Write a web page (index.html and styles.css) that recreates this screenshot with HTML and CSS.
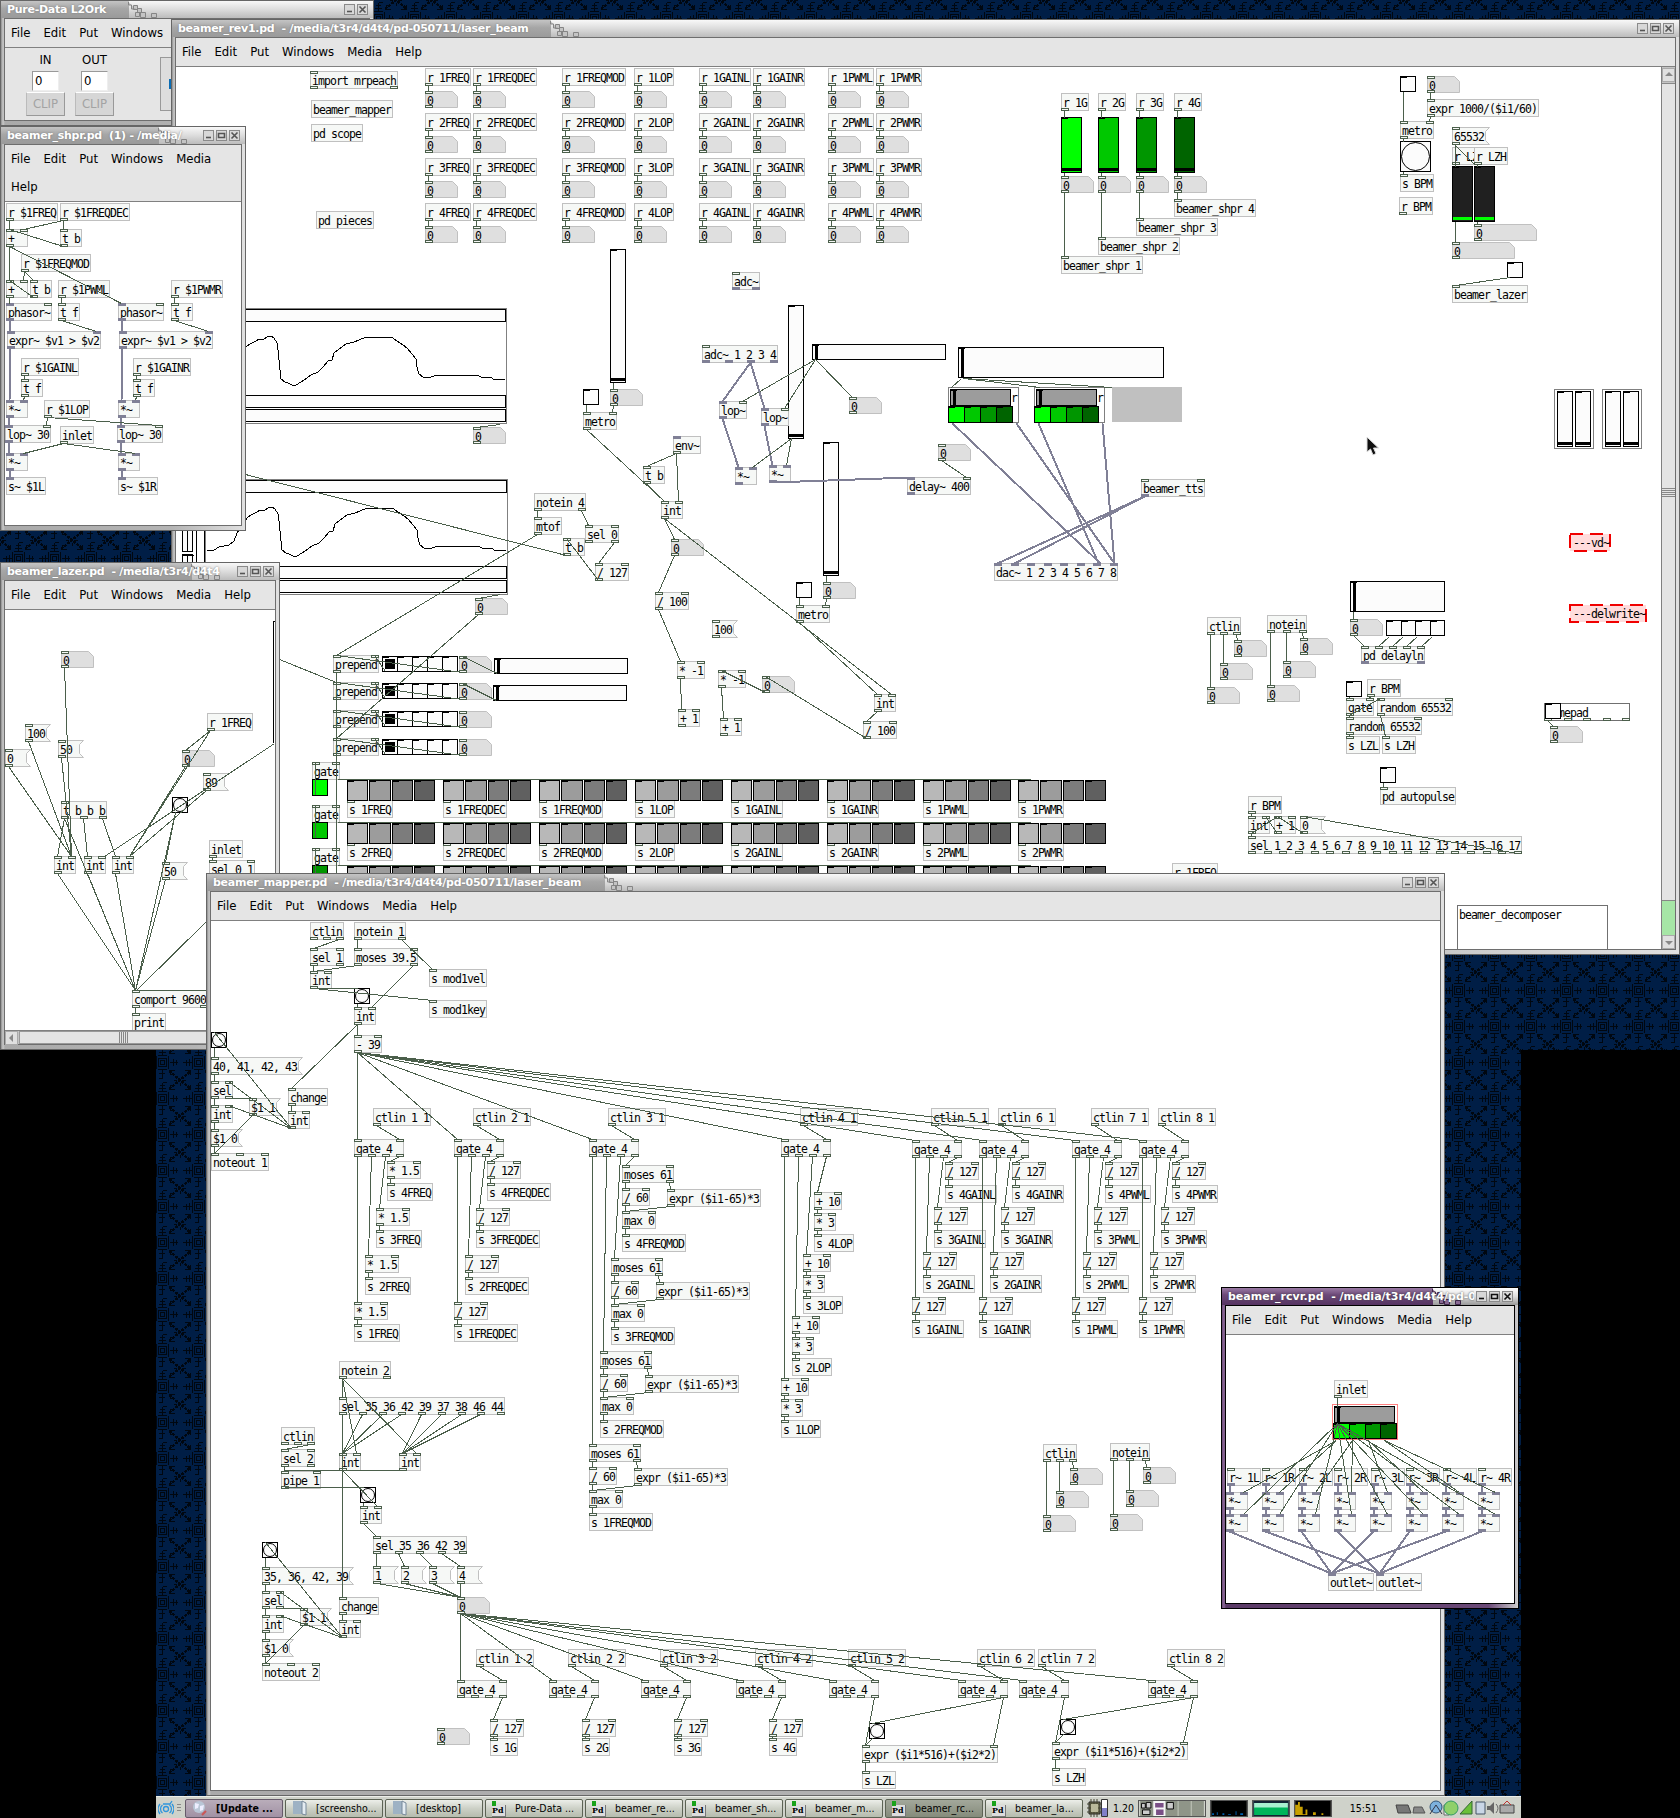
FILE: index.html
```html
<!DOCTYPE html>
<html lang="en">
<head>
<meta charset="utf-8">
<title>Pure-Data L2Ork desktop</title>
<link rel="stylesheet" href="styles.css">
</head>
<body>
<main class="desktop">
  <svg class="wallpaper" aria-hidden="true">
    <defs>
      <pattern id="damask" x="144" y="1044" width="36" height="36" patternUnits="userSpaceOnUse">
        <rect width="36" height="36" class="wp-base"/>
        <path class="wp-ink" d="M16.500 16.500h4v4h-4zM14.500 14.500h8v8h-8zM12.500 12v13M24.500 12v13M14 11.500h9M14 25.500h9M18.500 3v8M15 8.500h7M16 5.500h5M18.500 2.500h4M18.500 26v8M15 29.500h6M15 34.500h4M3 18.500h9M6.500 16v6M9.500 15v7M26 18.500h8M29.500 15v7M32.500 16v5"/>
        <path class="wp-ink wp-thick" d="M-11 -9L11 9M-11 9L11 -9M25 27L47 45M25 45L47 27M25 9L47 -9M25 -9L47 9M-11 27L11 45M-11 45L11 27"/>
        <path class="wp-ink" d="M5 9.500h5V5M26 5v4.500h5M5 26.500h5V31M26 31v-4.500h5M0 3v3M36 3v3M3 0h3M33 0h-3M3 36h3M33 36h-3"/>
      </pattern>
    </defs>
    <rect width="1680" height="1050" fill="url(#damask)"/>
    <rect x="156" y="1050" width="1365" height="768" fill="url(#damask)"/>
  </svg>

  <section class="window win-console">
    <header class="titlebar"><h2>Pure-Data L2Ork</h2></header>
    <div class="body">
      <nav class="menubar"><span>File</span><span>Edit</span><span>Put</span><span>Windows</span></nav>
      <div class="console">
        <div class="meter"><span>IN</span><span class="field">0</span><span class="clip">CLIP</span></div>
        <div class="meter"><span>OUT</span><span class="field">0</span><span class="clip">CLIP</span></div>
        <div class="dsp"></div>
      </div>
    </div>
  </section>

  <section class="window win-rev">
    <header class="titlebar"><h2>beamer_rev1.pd&nbsp; - /media/t3r4/d4t4/pd-050711/laser_beam</h2></header>
    <div class="body">
      <nav class="menubar"><span>File</span><span>Edit</span><span>Put</span><span>Windows</span><span>Media</span><span>Help</span></nav>
      <div class="row">
        <div class="canvas" id="rev"></div>
        <div class="vscroll"><i class="arrow up"></i><i class="thumb"></i><i class="page"></i><i class="arrow down"></i></div>
      </div>
    </div>
  </section>

  <section class="window win-shpr">
    <header class="titlebar"><h2>beamer_shpr.pd&nbsp; (1) - /media/</h2></header>
    <div class="body">
      <nav class="menubar"><span>File</span><span>Edit</span><span>Put</span><span>Windows</span><span>Media</span><span>Help</span></nav>
      <div class="canvas" id="shpr"></div>
    </div>
  </section>

  <section class="window win-lazer">
    <header class="titlebar"><h2>beamer_lazer.pd&nbsp; - /media/t3r4/d4t4</h2></header>
    <div class="body">
      <nav class="menubar"><span>File</span><span>Edit</span><span>Put</span><span>Windows</span><span>Media</span><span>Help</span></nav>
      <div class="canvas" id="lazer"></div>
      <div class="hscroll"><i class="arrow left"></i><i class="thumb"></i></div>
    </div>
  </section>

  <section class="window win-mapper">
    <header class="titlebar"><h2>beamer_mapper.pd&nbsp; - /media/t3r4/d4t4/pd-050711/laser_beam</h2></header>
    <div class="body">
      <nav class="menubar"><span>File</span><span>Edit</span><span>Put</span><span>Windows</span><span>Media</span><span>Help</span></nav>
      <div class="canvas" id="mapper"></div>
    </div>
  </section>

  <section class="window win-rcvr active">
    <header class="titlebar"><h2>beamer_rcvr.pd&nbsp; - /media/t3r4/d4t4/pd-0</h2></header>
    <div class="body">
      <nav class="menubar"><span>File</span><span>Edit</span><span>Put</span><span>Windows</span><span>Media</span><span>Help</span></nav>
      <div class="canvas" id="rcvr"></div>
    </div>
  </section>

  <footer class="taskbar">
    <svg class="launcher" viewBox="0 0 16 16"><circle cx="8" cy="9" r="2.500"/><path d="M4.500 5a5 5 0 0 0 0 8M2 4a8 8 0 0 0 0 10M11.500 5a5 5 0 0 1 0 8M14 4a8 8 0 0 1 0 10M5 4h7l2-3"/></svg>
    <i class="grip"></i>
    <span class="task urgent"><svg viewBox="0 0 16 16"><circle cx="8" cy="7" r="6" fill="#b9c6d6"/><path d="M4 3l4 1l-1 4l-3 1zM9 6l4-1l-1 5l-3 1z" fill="#eef"/><path d="M11 15l4-4" stroke="#c55" stroke-width="2"/></svg><b>[Update ...</b></span>
    <span class="task"><svg viewBox="0 0 16 16"><path d="M2 1h9v13H2z" fill="#9eb2c4"/><path d="M11 1l4 2v12l-4-1z" fill="#e4ecf2" stroke="#789"/></svg>[screensho...</span>
    <span class="task"><svg viewBox="0 0 16 16"><path d="M2 1h9v13H2z" fill="#9eb2c4"/><path d="M11 1l4 2v12l-4-1z" fill="#e4ecf2" stroke="#789"/></svg>[desktop]</span>
    <span class="task pd">Pure-Data ...</span>
    <span class="task pd">beamer_re...</span>
    <span class="task pd">beamer_sh...</span>
    <span class="task pd">beamer_m...</span>
    <span class="task pd pressed">beamer_rc...</span>
    <span class="task pd">beamer_la...</span>
    <svg class="chip" viewBox="0 0 22 18"><path d="M2 3h11v12H2z" fill="#77775a" stroke="#222"/><path d="M4 0v18M7 0v18M10 0v18M0 5h14M0 9h14M0 13h14" stroke="#444430"/><path d="M4 5h7v8H4z" fill="#b9b99a"/><path d="M14.500.500h6v17h-6z" fill="#fff" stroke="#333"/><path d="M15 9h5v8h-5z" fill="#8080c8"/></svg>
    <span class="load">1.20</span>
    <svg class="pager" viewBox="0 0 68 16"><path d="M0 0h68v16H0z" fill="#8f9588"/><path d="M14 0h13v16H14z" fill="#f4f4f4"/><path d="M1.500 2.500h4v5h-4zM6.500 1.500h5v6h-5zM2.500 9.500h8v5h-8zM28.500 1.500h7v7h-7z" fill="#ccc" stroke="#000"/><path d="M16 2h9v5h-9zM17 9h8v6h-8z" fill="#7a4f86"/><path d="M40.500 0v16M54.500 0v16" stroke="#c8ccc0"/></svg>
    <svg class="graph" viewBox="0 0 38 16"><path d="M0 0h38v16H0z" fill="#000"/><path d="M1 15v-2h2v2h3v-3h1v3h5v-2h2v2h4v-1h3v1h5v-4h1v4h4v-2h3v2z" fill="#0060b0"/></svg>
    <svg class="graph" viewBox="0 0 38 16"><path d="M0 0h38v16H0z" fill="#123"/><path d="M1 2h36v6H1z" fill="#a8f0d0"/><path d="M1 7h36v8H1z" fill="#00b45a"/></svg>
    <svg class="graph" viewBox="0 0 38 16"><path d="M0 0h38v16H0z" fill="#000"/><path d="M0 15V4h3V1h2v5h3v8h3V9h2v6h6v-3h3v3h6v-2h2v2z" fill="#c8a000"/></svg>
    <span class="clock">15:51</span>
    <svg class="tray" viewBox="0 0 126 18"><path d="M2 6h12l3 8H4z" fill="#777" stroke="#444"/><path d="M20 8h8l3 6H19z" fill="#888" stroke="#555"/><circle cx="42" cy="8" r="6" fill="#7db1dd" stroke="#357"/><path d="M36 15l6-9l6 9" fill="none" stroke="#334"/><path d="M50 6h5v10h-5z" fill="#eee" stroke="#666"/><circle cx="57" cy="9" r="7" fill="#8fd06a" stroke="#396"/><path d="M66 15l12-13v13z" fill="#6abf3a" stroke="#363"/><path d="M82 3h9v12h-9z" fill="#c9d6e6" stroke="#456"/><path d="M93 7h3l4-4v12l-4-4h-3z" fill="#666"/><path d="M102 5q4 4 0 9" stroke="#666" fill="none"/><path d="M106 6h14v8h-14z" fill="#aaa" stroke="#444"/><path d="M109 6l4-4l4 4" fill="none" stroke="#b33"/></svg>
  </footer>

  <svg class="cursor" viewBox="0 0 14 20"><path d="M1 1v15l3.500-3l2.500 6l3-1.500l-2.500-5.500h5z"/></svg>
</main>
<script src="patches.js"></script>
</body>
</html>
```
FILE: styles.css
```css
* { box-sizing: border-box; }
body { margin: 0; background: #000; font-family: "DejaVu Sans Condensed", "DejaVu Sans", sans-serif; color: #000; }
.desktop { position: relative; width: 1680px; height: 1818px; overflow: hidden; background: #000; }
.wallpaper { position: absolute; inset: 0; width: 1680px; height: 1818px; }
.wp-base { fill: #001e46; }
.wp-ink { fill: none; stroke: #000710; stroke-width: 1; shape-rendering: crispEdges; }
.wp-thick { stroke-width: 2.4; stroke-dasharray: 3 1; }

/* windows */
.window { position: absolute; display: flex; flex-direction: column; padding: 0 3px 4px; border: 1px solid #666; background: linear-gradient(90deg, #8e8e8e, #c8c8c8 2px, #aaa 4px, #b4b4b4 70%, #e0e0e0); }
.win-console { left: 0; top: 0; width: 374px; height: 126px; --split: 128px; }
.win-rev { left: 171px; top: 19px; width: 1509px; height: 936px; --split: 379px; }
.win-shpr { left: 0; top: 126px; width: 246px; height: 405px; --split: 158px; }
.win-lazer { left: 0; top: 562px; width: 280px; height: 488px; --split: 191px; }
.win-mapper { left: 206px; top: 873px; width: 1239px; height: 923px; --split: 398px; }
.win-rcvr { left: 1221px; top: 1287px; width: 298px; height: 322px; --split: 211px; }
.titlebar { position: relative; display: flex; justify-content: flex-end; align-items: center; gap: 2px; height: 17px; flex: none; margin: 0 -3px; padding-right: 5px; background: linear-gradient(#f8f8f8, #dcdcdc 50%, #bcbcbc); }
.titlebar::before { content: ""; position: absolute; left: 0; top: 0; bottom: 0; width: var(--split); background: linear-gradient(#c4c4c4, #a6a6a6 45%, #9a9a9a); }
.titlebar h2 { position: relative; flex: 1; min-width: 0; margin: 0; padding-left: 6px; overflow: hidden; white-space: nowrap; font: bold 11px/17px "DejaVu Sans", sans-serif; letter-spacing: -.27px; color: #fff; text-shadow: 0 0 2px #777; }
.titlebar .pixels { position: absolute; left: calc(var(--split) - 2px); top: 0; width: 32px; height: 17px; fill: #c4c4c4; stroke: #858585; }
.titlebar .knob { position: relative; flex: none; width: 11px; height: 11px; background: #d8d8d8; border: 1px solid #8a8a8a; }
.knob svg { display: block; width: 9px; height: 9px; stroke: #555; fill: none; stroke-width: 1.6; }
.body { flex: 1; min-height: 0; display: flex; flex-direction: column; border: 1px solid #6e6e6e; background: #e5e5e5; }
.menubar { flex: none; display: flex; flex-wrap: wrap; column-gap: 13px; padding: 0 6px; border-bottom: 1px solid #808080; background: #e5e5e5; font-size: 13px; line-height: 28px; }
.canvas { position: relative; flex: 1; min-height: 0; overflow: hidden; background: #fff; }
.row { flex: 1; min-height: 0; display: flex; }
.active { border-color: #000; background: linear-gradient(90deg, #6b4a78, #8c6a98 2px, #5a3a66 4px, #6b4a78 90%, #ccc); }
.active .titlebar { background: linear-gradient(#fff, #ddd 50%, #999); }
.active .titlebar::before { background: linear-gradient(#9a7aa4, #6d4a79 40%, #553361); }
.active .titlebar .pixels { fill: #8a6a94; stroke: #40284a; }
.active .titlebar h2 { text-shadow: 0 0 2px #444; letter-spacing: 0; }
.active .titlebar .knob svg { stroke: #111; }
.active .body { border-color: #000; }

/* audio console */
.console { flex: 1; display: flex; align-items: flex-start; padding: 1px 0 0 20px; gap: 8px; font-size: 13px; }
.meter { width: 41px; display: flex; flex-direction: column; align-items: center; line-height: 22px; }
.field { width: 27px; height: 20px; padding-left: 2px; line-height: 18px; background: #fff; border: 1px solid #999; border-right-color: #eee; border-bottom-color: #eee; }
.clip { width: 39px; height: 24px; margin-top: 1px; text-align: center; line-height: 21px; color: #a3a3a3; background: #d6d6d6; border: 1px solid #999; border-top-color: #fff; border-left-color: #bbb; }
.dsp { width: 60px; height: 54px; margin: 8px 0 0 37px; border: 1px solid #999; background: linear-gradient(#0a6cb4, #0a6cb4) 8px 21px / 2px 10px no-repeat, #ddd; }

/* scroll bars */
.vscroll { flex: none; width: 14px; display: flex; flex-direction: column; padding-top: 1px; background: #c4c4c4; border-left: 1px solid #808080; }
.vscroll .arrow, .hscroll .arrow { flex: none; position: relative; width: 13px; height: 14px; background: #e0e0e0; border: 1px solid #aaa; }
.arrow::after { content: ""; position: absolute; left: 2px; top: 3px; border: 4px solid transparent; }
.arrow.up::after { border-bottom-color: #888; border-top: 0; }
.arrow.down::after { border-top-color: #888; border-bottom: 0; top: 5px; }
.arrow.left::after { border-right-color: #888; border-left: 0; top: 2px; left: 3px; }
.vscroll .thumb { flex: 1; border: solid #888; border-width: 1px 0; background: repeating-linear-gradient(#888 0 1px, #e4e4e4 1px 2px) 0 404px / 100% 10px no-repeat, #e4e4e4; margin-top: 1px; }
.vscroll .page { flex: none; height: 34px; background: #a6e6a6; }
.hscroll { flex: none; height: 14px; display: flex; background: #c4c4c4; border-top: 1px solid #808080; }
.hscroll .thumb { flex: 1; margin-left: 1px; border: 1px solid #999; background: repeating-linear-gradient(90deg, #888 0 1px, #e4e4e4 1px 2px) 99px 0 / 10px 100% no-repeat, #e4e4e4; }

/* patch elements */
.wires { position: absolute; inset: 0; width: 100%; height: 100%; shape-rendering: crispEdges; fill: none; stroke: #4b5f4b; }
.wires .sig { stroke: #808096; stroke-width: 2; }
.wires .trace { stroke: #000; }
.node { position: absolute; height: 18px; font: 11.500px/12px "DejaVu Sans Mono", monospace; letter-spacing: -.92px; white-space: pre; }
.obj { padding: 3px 0 0 1px; background: #f6f8f6; border: 1px solid #c0c0c0; }
.num { height: 17px; padding: 4px 0 0 2px; }
.msg { padding: 4px 0 0 2px; }
.node > svg { position: absolute; left: 0; top: 0; z-index: -1; }
.num, .msg, .broken { isolation: isolate; }
.num svg { fill: #dfdfdf; stroke: #c0c0c0; }
.msg svg { fill: #f6f8f6; stroke: #c0c0c0; }
.io { position: absolute; width: 8px; height: 3px; background: #f6f8f6; border: 1px solid #4b5f4b; }
.io.s { background: #808096; border-color: #808096; }
.obj .io { margin-left: -1px; }
.obj .top { top: -1px; }
.obj .bottom { bottom: -1px; }
.top { top: 0; }
.bottom { bottom: 0; }
.obj.broken { background: none; border: 0; padding: 4px 0 0 4px; }
.broken svg { fill: #ffdcdc; stroke: #f00000; stroke-width: 2; stroke-dasharray: 13 7; }
.obj.plain { background: #fff; border-color: #707070; }
.comment { padding: 4px 0 0 0; }
.shape { background: #fcfcfc; border: 1px solid #000; }
.shape.g0 { background: #00ff00; }
.shape.g1 { background: #00c800; }
.shape.g2 { background: #009600; }
.bang svg { z-index: 0; fill: #fcfcfc; stroke: #000; stroke-width: 1; }
.slider::before { content: ""; position: absolute; background: #000; }
.slider.h::before { left: 2px; top: 0; bottom: 0; width: 3px; }
.slider.v::before { left: 0; right: 0; bottom: 1px; height: 3px; }
.slider.g::before { background: #0f0; bottom: 1px; height: 3px; }
.slider::after, .toggle::after, .radio i::after { content: ""; position: absolute; left: 0; top: 0; width: 6px; height: 1px; background: #000; }
.radio { display: flex; border: 0; background: none; }
.radio i { position: relative; flex: 1; border: 1px solid #000; margin-right: -1px; background: #fcfcfc; }
.radio i:last-child { margin-right: 0; }
.radio.split i { margin-right: 1px; }
.radio.split i:last-child { margin-right: 0; }
.radio.on i:first-child { background: #000; box-shadow: inset 0 0 0 2px #fcfcfc; }
.frame { border: 1px solid #808080; background: #fff; }
.frame.red { border-color: #ff8080; background: none; }
.fill { background: #c0c0c0; }

/* panel */
.taskbar { position: absolute; left: 156px; right: 159px; bottom: 0; height: 22px; display: flex; align-items: center; padding: 1px 1px 0 2px; border-top: 1px solid #eceee8; background: #cfd2ca; font: 10.500px/18px "DejaVu Sans Condensed", sans-serif; }
.launcher { flex: none; width: 16px; height: 18px; fill: none; stroke: #2f95dc; stroke-width: 1.3; }
.grip { width: 4px; height: 9px; margin: 0 4px 0 3px; background: repeating-linear-gradient(#888 0 1px, transparent 1px 3px); }
.task { flex: none; position: relative; display: flex; align-items: center; gap: 9px; width: 98px; height: 19px; margin-right: 2px; padding-left: 5px; border: 1px solid #5c6354; border-radius: 2px; background: linear-gradient(#eceee9, #ccd0c6 50%, #b6bcae); white-space: nowrap; }
.task svg { width: 16px; height: 16px; }
.task.urgent { background: linear-gradient(#b9adba, #a191a4); border-color: #665a6a; }
.task.pressed { background: linear-gradient(#a3a89b, #858b7b); }
.task.pd { padding-left: 29px; }
.task.pd::before { content: "Pd"; position: absolute; left: 6px; top: 5px; width: 13px; height: 11px; font: bold 8px/11px "DejaVu Serif", serif; background: #ddd; border: solid #777; border-width: 0 1px 1px 0; }
.task.pd::after { content: ""; position: absolute; left: 6px; top: 1px; width: 4px; height: 5px; background: #1ba31b; }
.chip { flex: none; width: 22px; height: 18px; margin-left: 2px; }
.load { width: 23px; margin: 0 2px 0 4px; }
.pager { flex: none; width: 68px; height: 17px; border: 1px solid #555; }
.graph { flex: none; width: 38px; height: 17px; margin-left: 4px; border: 1px solid #555; }
.clock { margin-left: auto; }
.tray { flex: none; width: 126px; height: 18px; margin-left: 17px; }
.cursor { position: absolute; left: 1366px; top: 436px; width: 14px; height: 20px; fill: #111; stroke: #ddd; }
```
FILE: patches.js
```js
// Patch files: one element per line, coordinates on the desktop grid.
//   o id x y ins:outs [w]|text    object      m id x y|text   message
//   n id x y [w]                  number      b/t id x y [s]  bang / toggle
//   h/v id x y w h [color] [cls]  slider      r id x y w h cells [colors] radio
//   w a.0 b.1                     patch cord  l x1 y1 x2 y2 [cls]  loose cord
const CHAR = 6;
const GREENS = '#00ff00,#00c800,#009600,#006400';
const GREYS = '#b8b8b8,#9c9c9c,#7c7c7c,#606060';
const NAMES = ['FREQ', 'FREQDEC', 'FREQMOD', 'LOP', 'GAINL', 'GAINR', 'PWML', 'PWMR'];

function box(cls, x, y, w, h) {
  const el = document.createElement('div');
  el.className = 'node ' + cls;
  el.style.cssText = `left:${x}px;top:${y}px;width:${w}px;height:${h}px`;
  return el;
}

function iolets(el, kinds, side, w) {
  const n = kinds.length;
  [...kinds].forEach((k, i) => {
    const io = document.createElement('i');
    io.className = `io ${side} ${k}`;
    io.style.left = Math.round(n > 1 ? i * (w - 8) / (n - 1) : 0) + 'px';
    el.append(io);
  });
}

function render(id, ox, oy, source) {
  const canvas = document.getElementById(id);
  const nodes = {};
  let cords = '';
  const end = (ref, out) => {
    const [name, i] = ref.split('.');
    const n = nodes[name];
    const count = Math.max((out ? n.outs : n.ins).length, 1);
    const dx = count > 1 ? i * (n.w - 8) / (count - 1) : 0;
    return [Math.round(n.x + dx + 3) + .5, out ? n.y + n.h - .5 : n.y + .5];
  };
  const line = (a, b, cls) => { cords += `<path class="${cls}" d="M${a}L${b}"/>`; };

  source.trim().split('\n').forEach(raw => {
    const [head, text = ''] = raw.trim().split('|');
    const f = head.trim().split(/\s+/);
    const kind = f[0];
    if (kind === 'w') {
      const from = nodes[f[1].split('.')[0]];
      line(end(f[1], true), end(f[2], false), from.outs[0] === 's' ? 'sig' : '');
      return;
    }
    if (kind === 'l') {
      line([f[1] - ox + .5, f[2] - oy + .5], [f[3] - ox + .5, f[4] - oy + .5], f[5] || '');
      return;
    }
    if (kind === 'p') {
      const pts = text.split(' ').map(p => p.split(',')).map(([x, y]) => [x - ox + +f[1], y - oy + +f[2]]);
      cords += `<polyline class="trace" points="${pts.join(' ')}"/>`;
      return;
    }
    const x = f[2] - ox, y = f[3] - oy;
    let w, h = 18, ins = 'c', outs = 'c', el;
    if (kind === 'o') {
      [ins, outs] = f[4].split(':').map(s => s.replace('-', ''));
      w = +f[5] || Math.max(text.length, 3) * CHAR + 4;
      if (+f[6]) h = +f[6];
      el = box('obj ' + (f[7] || ''), x, y, w, h);
      el.textContent = text;
      if (f[7] === 'broken') {
        el.insertAdjacentHTML('afterbegin', `<svg width="${w}" height="${h}"><rect x="1" y="1" width="${w - 2}" height="${h - 2}"/></svg>`);
      }
      iolets(el, ins, 'top', w);
      iolets(el, outs, 'bottom', w);
    } else if (kind === 'n') {
      w = +f[4] || 33; h = 17;
      el = box('num', x, y, w, h);
      el.innerHTML = `<svg width="${w}" height="${h}"><path d="M.5 .5H${w - 5.5}L${w - .5} 5.500V${h - .5}H.5z"/></svg>0`;
      iolets(el, 'c', 'top', w); iolets(el, 'c', 'bottom', w);
      ins = outs = 'c';
    } else if (kind === 'm') {
      w = Math.max(text.length, 3) * CHAR + 8;
      el = box('msg', x, y, w, h);
      el.innerHTML = `<svg width="${w}" height="${h}"><path d="M.5 .5H${w - .5}L${w - 4.5} 4.500V13.500L${w - .5} 17.500H.5z"/></svg>${text}`;
      iolets(el, 'c', 'top', w); iolets(el, 'c', 'bottom', w);
    } else if (kind === 'b') {
      w = h = +f[4] || 16;
      el = box('shape bang', x, y, w, h);
      el.innerHTML = `<svg width="${w - 2}" height="${h - 2}"><circle cx="${w / 2 - 1}" cy="${h / 2 - 1}" r="${w / 2 - 1.5}"/></svg>`;
    } else if (kind === 't') {
      w = h = 16;
      el = box('shape toggle', x, y, w, h);
    } else if (kind === 'h' || kind === 'v') {
      w = +f[4]; h = +f[5];
      el = box('shape slider ' + kind + ' ' + (f[7] || ''), x, y, w, h);
      if (f[6] && f[6] !== '-') el.style.background = f[6];
    } else if (kind === 'r') {
      w = +f[4]; h = +f[5];
      el = box('radio ' + (f[8] || ''), x, y, w, h);
      const colors = (f[7] || '').split(',');
      for (let i = 0; i < +f[6]; i++) {
        const c = document.createElement('i');
        if (colors[i] && colors[i] !== '-') c.style.background = colors[i];
        el.append(c);
      }
    } else {
      w = +f[4]; h = +f[5];
      el = box(f.slice(6).join(' '), x, y, w, h);
      el.textContent = text;
      ins = outs = '';
    }
    canvas.append(el);
    nodes[f[1]] = { x, y, w, h, ins, outs };
  });
  canvas.insertAdjacentHTML('beforeend', `<svg class="wires">${cords}</svg>`);
}

const out = [];
const add = s => out.push(s);
const flush = () => out.splice(0).join('\n');

// ---- beamer_rev1 ----
add(`o _ 310 71 c:cc|import mrpeach
o _ 311 100 -:-|beamer_mapper
o _ 311 124 -:-|pd scope
o _ 316 211 -:-|pd pieces`);
[425, 473, 562, 634, 699, 753, 828, 876].forEach((x, c) => {
  for (let r = 0; r < 4; r++) {
    add(`o r${c}${r} ${x} ${68 + 45 * r} -:c|r ${r + 1}${NAMES[c]}`);
    add(`n q${c}${r} ${x} ${91 + 45 * r}`);
    add(`w r${c}${r}.0 q${c}${r}.0`);
  }
});
const WAVE = '206,379 213,379 218,376 228,374 233,370 236,362 246,347 250,344 256,341 259,339 264,339 267,337 271,336 274,338 277,343 278,350 279,360 281,379 285,382 288,383 292,385 296,385 301,382 304,380 311,375 318,372 323,367 328,361 332,360 334,353 339,349 346,344 354,342 365,337.500 392,337.500 397,341 403,345 407,348 412,354 416,359 417,367 419,374 423,377 431,377 435,375.500 445,375.500 479,376 482,377.500 491,377.500 494,379.500 505,379.500';
[[204, 308], [205, 479]].forEach(([x, y], i) => {
  add(`x _ ${x} ${y} 303 116 frame`);
  add(`x _ ${x} ${y + 1} 302 13 shape`);
  add(`x _ ${x} ${y + 87} 302 13 shape`);
  add(`x _ ${x} ${y + 101} 302 13 shape`);
  add(`p ${i} ${y - 308}|${WAVE}`);
});
add(`r _ 182 520 11 32 2
r _ 182 554 11 32 2
l 196 479 196 595 trace
l 204 479 204 595 trace
n ga 473 427
l 500 424 476 427
n gb 475 598
l 500 594 478 598
o note 534 493 -:cc|notein 4
o mtof 534 517 c:c|mtof
o tb 563 538 c:c|t b
o sel 585 525 cc:cc|sel 0
o d127 595 563 cc:c|/ 127
w note.0 mtof.0
w note.1 sel.0
w sel.1 d127.0
w d127.0 tb.0
l 241 473 566 555
o tb2 643 466 c:c|t b
o env 673 436 s:c|env~
v va 610 249 16 134
t ta 583 389
n na 610 389
o metro 583 412 cc:c|metro
o int 661 501 cc:c|int
n nb 671 539
o d100 655 592 cc:c|/ 100
o ma 677 661 cc:c|* -1
o pa 678 709 cc:c|+ 1
m _ 712 620|100
o mb 718 670 cc:c|* -1
o pb 720 718 cc:c|+ 1
n nc 762 676
o int2 874 694 cc:c|int
o d100b 863 721 cc:c|/ 100
t tb9 796 582
n nd 823 582
v vc 823 442 16 134
o metro2 796 605 cc:c|metro
o _ 732 272 c:ss|adc~
o adc 702 345 c:ssss|adc~ 1 2 3 4
v vb 788 305 16 134
h hs1 812 344 134 16
n ne 849 397
o lopa 719 401 sc:s|lop~
o lopb 761 408 sc:s|lop~
o ta1 735 467 ss:s|*~
o ta2 769 465 ss:s|*~
n nf 938 444
o delay 907 477 sc:s|delay~ 400
h hsb 958 347 206 31
x _ 948 387 71 36 frame
h _ 950 389 61 17 #9c9c9c
r _ 948 406 65 17 4 ${GREENS}
x _ 1011 388 8 16 comment|r
x _ 1034 387 71 36 frame
h _ 1036 389 61 17 #9c9c9c
r _ 1034 406 65 17 4 ${GREENS}
x _ 1097 388 8 16 comment|r
x _ 1112 387 70 35 fill
o dac 994 563 ssssssss:-|dac~ 1 2 3 4 5 6 7 8
o tts 1141 479 cc:s|beamer_tts
l 952 423 1100 563 sig
l 1016 423 1114 563 sig
l 1038 423 1098 563 sig
l 1102 423 1114 563 sig
w tts.0 dac.0
w tts.0 dac.1
l 961 378 951 387
l 963 378 1040 387
l 963 378 1112 387
w hs1.0 lopa.1
w hs1.0 lopb.1
w hs1.0 ne.0
w adc.2 lopa.0
w adc.2 lopb.0
w lopa.0 ta1.0
w lopb.0 ta2.0
w vb.0 ta1.1
w vb.0 ta2.1
w ta2.0 delay.0
w nf.0 delay.1
w ta.0 metro.0
w va.0 na.0
w na.0 metro.1
w metro.0 int.0
w tb2.0 int.0
w env.0 tb2.0
w env.0 int.1
w int.0 nb.0
w int.0 int2.1
w nb.0 d100.0
w d100.0 ma.0
w ma.0 pa.0
w tb9.0 metro2.0
w vc.0 nd.0
w nd.0 metro2.1
w metro2.0 int2.0
w int2.0 d100b.0
w d100b.0 nc.0
w nc.0 mb.0
w mb.0 pb.0`);
[655, 682, 710, 738].forEach((y, i) => {
  add(`o pr${i} 333 ${y} cc:c|prepend`);
  add(`r ra${i} 382 ${y + 1} 76 16 5 - on`);
  add(`n np${i} 459 ${y + 1}`);
  add(`w np${i}.0 pr${i}.0`);
  add(`w ra${i}.0 pr${i}.1`);
  if (i < 2) {
    add(`h hp${i} ${494 - i} ${y + 3} 134 16`);
    add(`w hp${i}.0 np${i}.0`);
  }
});
add(`w mtof.0 pr0.0
l 274 657 336 682
w gb.0 pr3.0`);
[762, 805, 848].forEach((y, r) => {
  add(`o _ 312 ${y} cc:-|gate`);
  add(`x _ 312 ${y + 17} 16 17 shape g${r}`);
  [347, 443, 539, 635, 731, 827, 923, 1018].forEach((x, c) => {
    add(`o _ ${x} ${y + 38} c:-|s ${r + 1}${NAMES[c]}`);
    add(`r _ ${x} ${y + 18} 88 21 4 ${GREYS} split`);
  });
  add(`l 337 ${y + 17} 1030 ${y + 17}`);
  add(`l 315 ${y} 315 ${y + 32}`);
});
add('l 336 672 336 875');
[1061, 1098, 1136, 1174].forEach((x, i) => {
  add(`o rg${i} ${x} 93 -:c|r ${i + 1}G
v vg${i} ${x} 117 21 56 ${GREENS.split(',')[i]}
n ng${i} ${x} 176
o sh${i} ${x} ${256 - 19 * i} c:-|beamer_shpr ${i + 1}
w rg${i}.0 vg${i}.0
w vg${i}.0 ng${i}.0
w ng${i}.0 sh${i}.0`);
});
add(`t t1 1400 76
n n1 1427 76
o ex 1427 99 c:c|expr 1000/($i1/60)
o me 1400 121 cc:c|metro
b bg 1400 141 31
o sb 1400 174 c:-|s BPM
o _ 1399 197 -:c|r BPM
m mm 1452 127|65532
o _ 1452 147 -:c|r LZL
o rh 1474 147 -:c|r LZH
v v1 1452 166 21 56 #202020 g
v v2 1474 166 21 56 #202020 g
n n2 1474 224 63
n n3 1452 242 63
t t2 1507 262
o lz 1452 285 c:-|beamer_lazer
w t1.0 me.0
w n1.0 ex.0
w ex.0 me.1
w me.0 bg.0
w bg.0 sb.0
w mm.0 v1.0
l 1455 145 1474 164
w rh.0 v2.0
w v2.0 n2.0
w v1.0 n3.0
w t2.0 lz.0`);
[1554, 1602].forEach(x => add(`x _ ${x} 389 40 60 frame
v _ ${x + 3} 391 16 56
v _ ${x + 21} 391 16 56`));
[[1207, 617, 'ctlin', 1234, 1220, 0], [1267, 615, 'notein', 1300, 1283, 1]].forEach(([x, y, t, x3, x2, k]) => add(`o c${k} ${x} ${y} -:ccc|${t}
n d${k} ${x3} ${y + 23}
n e${k} ${x2} ${y + 46}
n f${k} ${x} ${y + 70}
w c${k}.2 d${k}.0
w c${k}.1 e${k}.0
w c${k}.0 f${k}.0`));
add(`h hd 1350 581 95 31
n dn 1350 619
r _ 1386 620 59 16 4
o dl 1361 646 ccccc:ss|pd delayln
w hd.0 dn.0
w dn.0 dl.0
l 1389 636 1378 646
l 1403 636 1392 646
l 1417 636 1406 646
l 1432 636 1421 646
t tg 1346 681
o rb 1367 679 -:c|r BPM
o gt 1346 698 cc:c|gate
o rna 1377 698 cc:c|random 65532
o rnb 1346 717 cc:c|random 65532
o sl 1346 736 c:-|s LZL
o sh 1382 736 c:-|s LZH
w tg.0 gt.0
w rb.0 gt.1
w gt.0 rnb.0
w gt.0 rna.0
w rnb.0 sl.0
w rna.0 sh.0
t ap 1380 767
o au 1380 787 c:-|pd autopulse
w ap.0 au.0
o rb2 1248 796 -:c|r BPM
o in2 1248 816 cc:c|int
o pl2 1274 816 cc:c|+ 1
m ms2 1300 816|0
o se2 1248 836 c:cccccccccccccccccc|sel 1 2 3 4 5 6 7 8 9 10 11 12 13 14 15 16 17
w rb2.0 in2.0
w in2.0 se2.0
w in2.0 pl2.0
w pl2.0 in2.1
w ms2.0 pl2.0
w se2.17 ms2.0
o _ 1172 863 -:c|r 1FREQ
o _ 1569 533 -:- 42 19 broken|---vd~
o _ 1569 604 -:- 78 19 broken|---delwrite~
o _ 1544 703 -:ccccc 86 18 plain|gamepad
t gp 1545 703
n gn 1550 726
l 1548 721 1553 726
o _ 1457 905 -:- 151 60 plain|beamer_decomposer`);
render('rev', 176, 67, flush());

// ---- beamer_shpr ----
add(`o a 6 203 -:c|r $1FREQ
o b 60 203 -:c|r $1FREQDEC
o c 6 229 cc:c|+
o d 60 229 c:c|t b
o e 21 254 -:c|r $1FREQMOD
o f 6 280 cc:c|+
o g 30 280 c:c|t b
o h 58 280 -:c|r $1PWML
o i 171 280 -:c|r $1PWMR
o j 58 303 c:c|t f
o k 171 303 c:c|t f
w a.0 c.0
w b.0 c.1
w b.0 d.0
w d.0 c.0
w c.0 f.0
w e.0 f.1
w e.0 g.0
w g.0 f.0
w h.0 j.0
w i.0 k.0
o lop 44 400 -:c|r $1LOP
o inl 60 426 -:c|inlet`);
[[6, 'L', 'j'], [118, 'R', 'k']].forEach(([x, s, tf]) => add(`o ph${s} ${x} 303 sc:s|phasor~
o ex${s} ${x + 1} 331 ss:s|expr~ $v1 > $v2
o ga${s} ${x + 15} 358 -:c|r $1GAIN${s}
o tf${s} ${x + 15} 379 c:c|t f
o mu${s} ${x} 400 ss:s|*~
o lo${s} ${x - 1} 425 sc:s|lop~ 30
o mv${s} ${x} 453 ss:s|*~
o se${s} ${x} 477 s:-|s~ $1${s}
w ph${s}.0 ex${s}.0
w ${tf}.0 ex${s}.1
w ga${s}.0 tf${s}.0
w tf${s}.0 mu${s}.1
w ex${s}.0 mu${s}.0
w mu${s}.0 lo${s}.0
w lo${s}.0 mv${s}.0
w mv${s}.0 se${s}.0
w lop.0 lo${s}.1
w inl.0 mv${s}.1`));
add(`w f.0 phL.0
w c.0 phR.0`);
render('shpr', 5, 202, flush());

// ---- beamer_lazer ----
render('lazer', 5, 610, `n n 61 651
o r 207 713 -:c|r 1FREQ
m h 25 724|100
m f 58 740|50
m z 5 749|0
n k 182 750
m e 203 773|89
b b 172 797
o t 61 801 c:ccc|t b b b
o i1 54 856 cc:c|int
o i2 84 856 cc:c|int
o i3 112 856 cc:c|int
m g 162 862|50
o in 209 840 -:c|inlet
o se 209 860 cc:cc|sel 0 1
o co 132 990 c:cc|comport 9600
o pr 132 1013 c:-|print
w n.0 i1.1
w h.0 i1.1
w z.0 i1.1
w f.0 i1.1
w t.0 i1.0
w t.1 i2.0
w t.2 i3.0
w t.0 co.0
w r.0 k.0
w r.0 i3.1
w k.0 i3.1
w e.0 i3.1
l 274 743 104 856
w in.0 se.0
w b.0 g.0
w b.0 co.0
w i1.0 co.0
w i2.0 co.0
w i3.0 co.0
w g.0 co.0
l 207 920 136 990
l 136 990 209 990
w co.0 pr.0
l 273 621 273 742 trace
l 272 621 274 621 trace`);

// ---- beamer_mapper ----
add(`o a 310 922 -:ccc|ctlin
o b 354 922 -:cc|notein 1
o c 310 948 cc:cc|sel 1
o d 354 948 cc:cc|moses 39.5
o e 310 971 cc:c|int
b f 354 988
o g 354 1007 cc:c|int
o h 429 969 c:-|s mod1vel
o i 429 1000 c:-|s mod1key
o src 354 1035 cc:c|- 39
w a.2 c.0
w c.0 e.0
w b.0 d.0
w d.0 e.0
w b.1 h.0
w d.1 g.1
w e.0 i.0
w e.0 f.0
w f.0 g.0
w g.0 src.0`);
const loop = (p, x, y, label, no, dx, dy) => add(`b ${p}b ${x} ${y}
m ${p}m ${x} ${y + 25}|${label}
o ${p}s ${x} ${y + 49} cc:cc|sel
o ${p}i ${x} ${y + 73} cc:c|int
m ${p}z ${x} ${y + 97}|$1 0
o ${p}n ${x} ${y + 121} ccc:-|noteout ${no}
m ${p}o ${x + 38} ${y + 66}|$1 1
o ${p}c ${x + dx} ${y + dy} c:c|change
o ${p}k ${x + dx} ${y + dy + 23} cc:c|int
w ${p}b.0 ${p}m.0
w ${p}m.0 ${p}s.0
w ${p}s.0 ${p}i.0
w ${p}i.0 ${p}z.0
w ${p}z.0 ${p}n.0
w ${p}s.1 ${p}o.0
w ${p}o.0 ${p}n.0
w ${p}c.0 ${p}k.0
w ${p}k.0 ${p}b.0
w ${p}k.0 ${p}s.1
w ${p}k.0 ${p}i.1`);
loop('x', 211, 1032, '40, 41, 42, 43', 1, 77, 56);
loop('y', 262, 1542, '35, 36, 42, 39', 2, 77, 55);
add('w g.0 xc.0');
[354, 454, 589, 781, 912, 979, 1072, 1139].forEach((x, c) => {
  const gy = c < 4 ? 1139 : 1140;
  add(`o ct${c} ${x + 19} 1108 -:c|ctlin ${c + 1} 1
o gt${c} ${x} ${gy} cc:cccc 50|gate 4
w ct${c}.0 gt${c}.1
w src.0 gt${c}.0`);
  for (let k = 0; k < 4; k++) {
    const px = x + 11 * k, up = 3 - k, id = `${c}${k}`, name = `s ${k + 1}${NAMES[c]}`;
    if (c === 2) {
      const y = 1165 + 93 * up;
      add(`o m${id} ${px} ${y} cc:cc|moses 61
o s${id} ${px} ${y + 23} cc:c|/ 60
o e${id} ${px + 45} ${y + 24} c:c|expr ($i1-65)*3
o x${id} ${px} ${y + 46} cc:c|max 0
o t${id} ${px} ${y + 69} c:-|${name}
w m${id}.0 s${id}.0
w m${id}.1 e${id}.0
w s${id}.0 x${id}.0
w e${id}.0 x${id}.0
w x${id}.0 t${id}.0`);
    } else if (c === 3) {
      const y = 1192 + 62 * up;
      add(`o m${id} ${px} ${y} cc:c|+ 10
o s${id} ${px} ${y + 21} cc:c|* 3
o t${id} ${px} ${y + 42} c:-|${name}
w m${id}.0 s${id}.0
w s${id}.0 t${id}.0`);
    } else {
      const y = c < 2 ? 1161 + 47 * up : 1162 + 45 * up;
      add(`o m${id} ${px} ${y} cc:c|${c ? '/ 127' : '* 1.5'}
o t${id} ${px} ${y + (c < 2 ? 22 : 23)} c:-|${name}
w m${id}.0 t${id}.0`);
    }
    add(`w gt${c}.${k} m${id}.0`);
  }
});
add(`o n2 339 1361 -:cc|notein 2
o s8 339 1397 c:ccccccccc|sel 35 36 42 39 37 38 46 44
o ia 339 1453 cc:c|int
o ib 399 1453 cc:c|int
o cl 281 1427 -:ccc|ctlin
o s2 281 1449 cc:cc|sel 2
o pi 281 1471 cc:c|pipe 1
b bb 360 1487
o ic 360 1506 cc:c|int
o s4 373 1536 c:ccccc|sel 35 36 42 39
m m0 373 1566|1
m m1 401 1566|2
m m2 429 1566|3
m m3 457 1566|4
n num 457 1597
n _ 437 1728
w n2.0 s8.0
w n2.0 ia.1
w n2.0 ib.1
w s8.0 yc.0
w s8.1 ia.0
w s8.2 ia.0
w s8.3 ia.0
w s8.4 ib.0
w s8.5 ib.0
w s8.6 ib.0
w s8.7 ib.0
w cl.2 s2.0
w s2.0 pi.0
l 284 1470 403 1470
l 284 1487 363 1487
w ia.0 ic.1
w bb.0 ic.0
w ic.0 s4.0
w s4.0 m0.0
w s4.1 m1.0
w s4.2 m2.0
w s4.3 m3.0
w m0.0 num.0
w m1.0 num.0
w m2.0 num.0
w m3.0 num.0`);
[457, 549, 641, 736, 829, 958, 1019, 1148].forEach((x, c) => {
  add(`o bc${c} ${x + 19} 1649 -:c|ctlin ${c + 1} 2
o bg${c} ${x} 1680 cc:cccc 50|gate 4
w bc${c}.0 bg${c}.1
w num.0 bg${c}.0`);
  if (c < 4) add(`o bd${c} ${x + 33} 1719 cc:c|/ 127
o be${c} ${x + 33} 1738 c:-|s ${c + 1}G
w bg${c}.3 bd${c}.0
w bd${c}.0 be${c}.0`);
});
[[862, 1745, 869, 1723, 'LZL', 4], [1052, 1742, 1060, 1719, 'LZH', 6]].forEach(([x, y, bx, by, n, g]) => add(`b k${g} ${bx} ${by}
o ee${g} ${x} ${y} cc:c|expr ($i1*516)+($i2*2)
o ss${g} ${x} ${y + 26} c:-|s ${n}
w bg${g}.3 ee${g}.0
w bg${g + 1}.3 k${g}.0
w bg${g + 1}.3 ee${g}.1
w k${g}.0 ee${g}.0
w ee${g}.0 ss${g}.0`));
[[1043, 1444, 'ctlin', 1070, 1056, 0], [1110, 1443, 'notein', 1143, 1126, 1]].forEach(([x, y, t, x3, x2, k]) => add(`o u${k} ${x} ${y} -:ccc|${t}
n o${k} ${x3} ${y + 24}
n p${k} ${x2} ${y + 47}
n v${k} ${x} ${y + 71}
w u${k}.2 o${k}.0
w u${k}.1 p${k}.0
w u${k}.0 v${k}.0`));
render('mapper', 211, 921, flush());

// ---- beamer_rcvr ----
add(`o in 1334 1380 -:c|inlet
x _ 1332 1404 66 36 frame red
h hs 1334 1406 61 17 #9c9c9c
r _ 1333 1423 64 16 4 ${GREENS}
w in.0 hs.0
o oL 1328 1573 s:-|outlet~
o oR 1376 1573 s:-|outlet~`);
[1227, 1262, 1299, 1334, 1371, 1406, 1443, 1478].forEach((x, i) => {
  const mx = 1226 + 36 * i, s = i % 2 ? 'R' : 'L';
  add(`o r${i} ${x} 1468 c:s|r~ ${(i >> 1) + 1}${s}
o m${i} ${mx} 1492 ss:s|*~
o k${i} ${mx} 1514 ss:s|*~
w r${i}.0 m${i}.0
w m${i}.0 k${i}.0
w k${i}.0 o${s}.0
l ${1336 + 16 * (i >> 1)} 1440 ${mx + 17} 1492
l 1337 1423 ${mx + 17} 1514`);
});
render('rcvr', 1226, 1335, flush());

// ---- window decorations ----
document.querySelectorAll('.titlebar').forEach(bar => {
  const small = bar.parentElement.classList.contains('win-console');
  bar.insertAdjacentHTML('afterbegin', `<svg class="pixels"><path d="M1.500 1v3h3v4h4M6.500 4.500h4v4h-4zM10.500 7.500h4v4h-4zM8.500 11.500h4v4h-4zM13.500 11.500h5v5h-5zM24.500 12.500h5v4h-5z"/></svg>`);
  const glyphs = ['M2 6.500h5', 'M1.500 2.500h6v4h-6z', 'M1.500 1.500l6 6M7.500 1.500l-6 6'];
  glyphs.forEach((d, i) => {
    if (small && i === 1) return;
    bar.insertAdjacentHTML('beforeend', `<span class="knob"><svg><path d="${d}"/></svg></span>`);
  });
});
```
